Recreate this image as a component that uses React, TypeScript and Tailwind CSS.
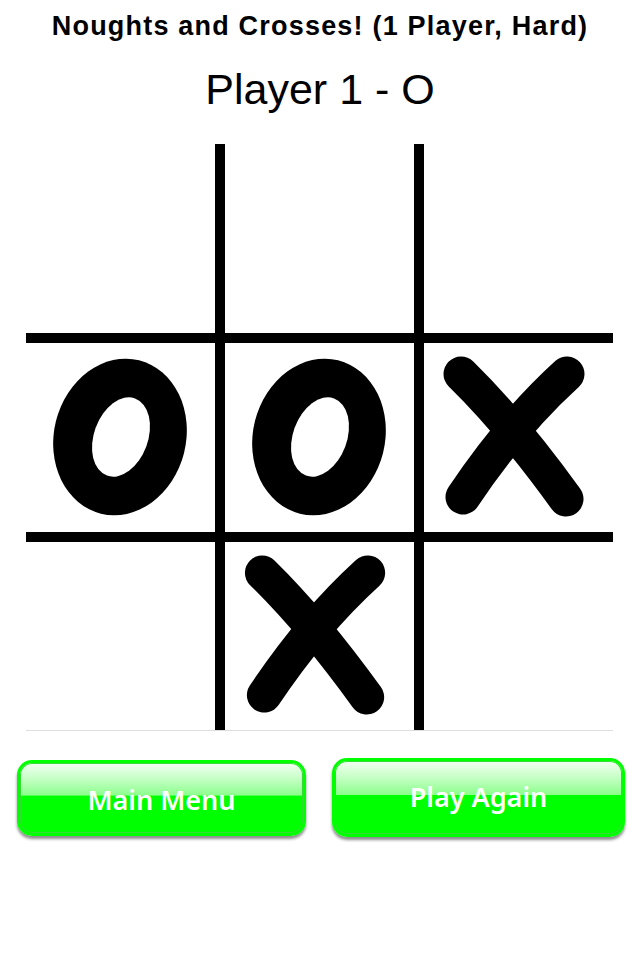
type Mark = 'O' | 'X' | null

const board: Mark[] = [null, null, null, 'O', 'O', 'X', null, 'X', null]

function Nought() {
  return (
    <svg viewBox="0 0 189 189" className="w-full h-full">
      <ellipse cx="94" cy="94" rx="66" ry="79" fill="#000" transform="rotate(14 94 94)" />
      <ellipse cx="95" cy="94" rx="27" ry="41" fill="#fff" transform="rotate(20 95 94)" />
    </svg>
  )
}

function Cross() {
  return (
    <svg viewBox="0 0 189 189" className="w-full h-full">
      <g fill="none" stroke="#000" strokeWidth="35" strokeLinecap="round">
        <path d="M37 31 Q88 81 142 156" />
        <path d="M39 154 Q87 82 143 31" />
      </g>
    </svg>
  )
}

function GlossButton({ label, className }: { label: string; className: string }) {
  return (
    <button
      className={`rounded-[15px] border-[3px] border-[#00ff00] bg-[linear-gradient(to_bottom,#f4fff4_0%,#c0ffc0_25%,#8cff8c_46%,#00ff00_47%,#00ff00_100%)] shadow-[0_3px_3px_rgba(0,0,0,0.45),inset_0_0_0_1px_#33dd33] text-white text-[27px] font-semibold ${className}`}
      style={{ fontFamily: '"Comic Sans MS", "Noto Sans", sans-serif' }}
    >
      {label}
    </button>
  )
}

export default function App() {
  return (
    <div className="w-[640px] h-[960px] bg-white text-black" style={{ fontFamily: '"Liberation Sans", Arial, sans-serif' }}>
      <h1 className="pt-[13px] text-center text-[27px] leading-[26px] font-bold tracking-[1.2px]">
        Noughts and Crosses! (1 Player, Hard)
      </h1>
      <div className="mt-[29px] text-center text-[43px] leading-[42px]">Player 1 - O</div>

      {/* Board */}
      <div className="mt-[34px] ml-[26px] w-[587px] border-b border-[#dedede]">
        <div className="grid grid-cols-[189px_189px_189px] grid-rows-[189px_189px_188px] gap-[10px] bg-black">
          {board.map((m, i) => (
            <div key={i} className="bg-white flex items-center justify-center">
              {m === 'O' && <Nought />}
              {m === 'X' && <Cross />}
            </div>
          ))}
        </div>
      </div>

      {/* Buttons */}
      <div className="mt-[27px] flex items-start pl-[17px]">
        <GlossButton label="Main Menu" className="mt-[2px] w-[289px] h-[76px] pt-[4px]" />
        <GlossButton label="Play Again" className="ml-[26px] w-[293px] h-[79px]" />
      </div>
    </div>
  )
}
